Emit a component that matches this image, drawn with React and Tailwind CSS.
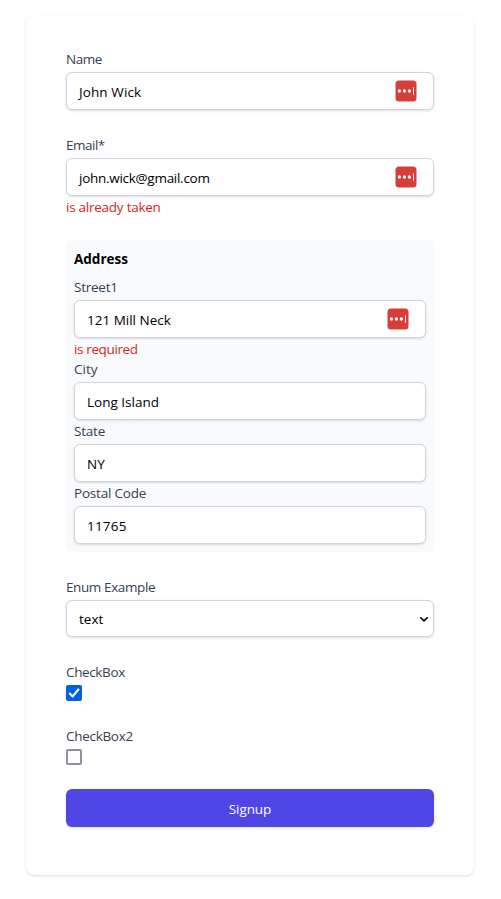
const inputClass =
  "flex h-[38px] items-center rounded-md border border-[#d1d5db] bg-white pl-3 pr-4 shadow-sm";

function PasswordManagerIcon() {
  return (
    <svg className="-mt-px ml-auto block h-[22px] w-[22px]" viewBox="0 0 22 22" fill="none">
      <rect x="0.5" y="0.5" width="21" height="21" rx="3.5" fill="#d83d3a" />
      <circle cx="4.4" cy="11" r="1.65" fill="#fff" />
      <circle cx="9.4" cy="11" r="1.65" fill="#fff" />
      <circle cx="14.4" cy="11" r="1.65" fill="#fff" />
      <rect x="18" y="7" width="1" height="8" rx="0.4" fill="#fff" />
    </svg>
  );
}

function Label({ children, tracking = "" }) {
  return (
    <div className="h-5 text-[#374151]">
      <span className={`relative top-px ${tracking}`}>{children}</span>
    </div>
  );
}

function Field({ label, value, error, icon, labelTracking, valueTracking = "", errorTracking = "" }) {
  return (
    <div>
      <Label tracking={labelTracking}>{label}</Label>
      <div className={`mt-1 ${inputClass}`}>
        <span className={`relative top-px text-black ${valueTracking}`}>{value}</span>
        {icon && <PasswordManagerIcon />}
      </div>
      {error && (
        <div className="h-5 text-[#dc2626]">
          <span className={`relative top-px ${errorTracking}`}>{error}</span>
        </div>
      )}
    </div>
  );
}

export default function App() {
  return (
    <div className="h-[899px] w-[501px] overflow-hidden bg-white pt-4 font-['Open_Sans','Noto_Sans',sans-serif] text-[13.5px] leading-5">
      <form className="ml-[26px] flex h-[859px] w-[448px] flex-col gap-6 rounded-lg bg-white px-10 pt-8 shadow">
        <Field label="Name" labelTracking="tracking-[-0.45px]" value="John Wick" valueTracking="tracking-[0.1px]" icon />
        <Field
          label="Email*"
          labelTracking="tracking-[-0.5px]"
          value="john.wick@gmail.com"
          valueTracking="tracking-[-0.28px]"
          error="is already taken"
          errorTracking="tracking-[-0.25px]"
          icon
        />
        <section className="rounded-md bg-[#f9fafb] p-2">
          <h2 className="mb-2 h-5 font-bold text-black"><span className="relative top-px">Address</span></h2>
          <Field
            label="Street1"
            labelTracking="tracking-[-0.25px]"
            value="121 Mill Neck"
            error="is required"
            errorTracking="tracking-[-0.37px]"
            icon
          />
          <Field label="City" value="Long Island" />
          <Field label="State" labelTracking="tracking-[-0.2px]" value="NY" />
          <Field label="Postal Code" labelTracking="tracking-[-0.2px]" value="11765" valueTracking="tracking-[0.2px]" />
        </section>
        <div>
          <Label tracking="tracking-[-0.4px]">Enum Example</Label>
          <div className="mt-1 flex h-[37px] items-center rounded-md border border-[#d1d5db] bg-white pl-3 pr-[5px] shadow-sm">
            <span className="text-black">text</span>
            <svg className="ml-auto h-2 w-2" viewBox="0 0 8 8" fill="none">
              <path d="M0.4 2.2 4 5.8l3.6-3.6" stroke="#000" strokeWidth="1.6" />
            </svg>
          </div>
        </div>
        <div>
          <Label tracking="tracking-[-0.37px]">CheckBox</Label>
          <div className="mt-1 h-4 w-4 rounded-[2px] bg-[#0060df]">
            <svg className="h-4 w-4" viewBox="0 0 16 16" fill="none">
              <path d="m3.8 8.5 2.8 3 5.8-7" stroke="#fff" strokeWidth="2" strokeLinecap="round" strokeLinejoin="round" />
            </svg>
          </div>
        </div>
        <div>
          <Label tracking="tracking-[-0.3px]">CheckBox2</Label>
          <div className="mt-1 h-4 w-4 rounded-[2px] border-2 border-[#8f8f9d] bg-white" />
        </div>
        <button type="button" className="flex h-[38px] shrink-0 items-center justify-center rounded-md bg-[#4f46e5] text-white shadow-sm">
          <span className="relative top-px tracking-[-0.1px]">Signup</span>
        </button>
      </form>
    </div>
  );
}
